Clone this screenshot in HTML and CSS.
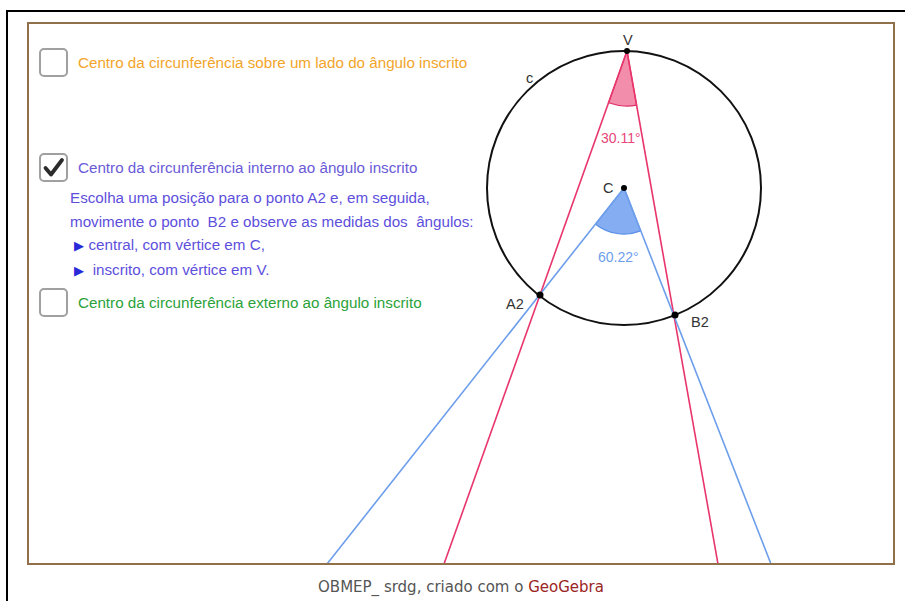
FILE: index.html
```html
<!DOCTYPE html>
<html lang="pt">
<head>
    <meta charset="UTF-8">
    <meta name="viewport" content="width=device-width, initial-scale=1.0">
    <title>Ângulo inscrito e ângulo central</title>
    <link rel="stylesheet" href="styles.css">
</head>
<body>
    <div class="frame">
        <div class="applet">
            <svg class="figure" width="864" height="539" viewBox="29 24 864 539">
                <!-- angulos -->
                <path d="M624 188 L595.6 224.2 A46 46 0 0 0 640.7 230.9 Z" fill="#6f9ff0" fill-opacity="0.85" stroke="#5b8fe8" stroke-width="1.2"/>
                <path d="M627 51 L608.5 102.8 A55 55 0 0 0 636.6 105.2 Z" fill="#ec5c88" fill-opacity="0.7" stroke="#e0306a" stroke-width="1.2"/>

                <!-- semirretas -->
                <line x1="627" y1="51" x2="444" y2="564" stroke="#e8356c" stroke-width="1.6"/>
                <line x1="627" y1="51" x2="718" y2="564" stroke="#e8356c" stroke-width="1.6"/>
                <line x1="624" y1="188" x2="327" y2="564" stroke="#6d9eeb" stroke-width="1.6"/>
                <line x1="624" y1="188" x2="771" y2="564" stroke="#6d9eeb" stroke-width="1.6"/>

                <circle cx="624" cy="188" r="137" fill="none" stroke="#111" stroke-width="2"/>

                <!-- pontos -->
                <circle cx="627" cy="51" r="3" fill="#000"/>
                <circle cx="624" cy="188" r="3" fill="#000"/>
                <circle cx="540" cy="295" r="3.5" fill="#000"/>
                <circle cx="675" cy="315" r="3.5" fill="#000"/>

                <g class="labels">
                    <text x="623" y="45">V</text>
                    <text x="526" y="83">c</text>
                    <text x="603" y="193">C</text>
                    <text x="506" y="309">A2</text>
                    <text x="691" y="327">B2</text>
                </g>
                <text class="measure red" x="601" y="143">30.11°</text>
                <text class="measure blue" x="598" y="262">60.22°</text>
            </svg>

            <div class="controls">
                <label class="option orange">
                    <span class="box"></span>
                    <span>Centro da circunferência sobre um lado do ângulo inscrito</span>
                </label>

                <label class="option purple second">
                    <span class="box">
                        <svg width="25" height="25" viewBox="0 0 25 25">
                            <path d="M4.5 13 L10 19.5 L21 5" fill="none" stroke="#2b2b2b" stroke-width="3.8" stroke-linecap="round" stroke-linejoin="round"/>
                        </svg>
                    </span>
                    <span>Centro da circunferência interno ao ângulo inscrito</span>
                </label>

                <div class="hint">
                    <div class="line">Escolha uma posição para o ponto A2 e, em seguida,</div>
                    <div class="line">movimente o ponto  B2 e observe as medidas dos  ângulos:</div>
                    <div class="line"> <span class="arrow">▶</span> central, com vértice em C,</div>
                    <div class="line"> <span class="arrow">▶</span>  inscrito, com vértice em V.</div>
                </div>

                <label class="option green">
                    <span class="box"></span>
                    <span>Centro da circunferência externo ao ângulo inscrito</span>
                </label>
            </div>
        </div>

        <p class="credit">OBMEP_ srdg, criado com o <span class="brand">GeoGebra</span></p>
    </div>
</body>
</html>
```

FILE: styles.css
```css
body {
    margin: 0;
    background: #fff;
    font-family: 'Liberation Sans', Arial, sans-serif;
}

.frame {
    margin: 10px 0 0 6px;
    height: 591px;
    box-sizing: border-box;
    border-top: 2px solid #000;
    border-left: 2px solid #000;
    padding: 10px 0 0 19px;
}

.applet {
    position: relative;
    width: 864px;
    height: 539px;
    border: 2px solid #90704a;
    background: #fff;
}

.figure {
    position: absolute;
    left: 0;
    top: 0;
}

.labels text {
    font-family: 'Liberation Sans', Arial, sans-serif;
    font-size: 14.5px;
    fill: #333;
}

.measure {
    font-family: 'Liberation Sans', Arial, sans-serif;
    font-size: 14px;
}

.measure.red {
    fill: #e8457a;
}

.measure.blue {
    fill: #6d9eeb;
}

.controls {
    position: relative;
    padding: 24px 0 0 10px;
    width: 470px;
}

.option {
    display: flex;
    align-items: center;
    gap: 10px;
    height: 29px;
    font-size: 15.2px;
    cursor: pointer;
}

.box {
    width: 29px;
    height: 29px;
    flex: none;
    box-sizing: border-box;
    border: 2px solid #a0a0a0;
    border-radius: 5px;
    background: #fff;
    display: flex;
    align-items: center;
    justify-content: center;
}

.orange {
    color: #f2a52a;
}

.purple {
    color: #6a5ad8;
}

.green {
    color: #2ba23a;
}

.second {
    margin-top: 76px;
}

.hint {
    margin: 4px 0 0 31px;
    font-size: 15.2px;
    line-height: 23.5px;
    color: #5d4fdc;
}

.line {
    white-space: pre;
}

.arrow {
    color: #2a2ad8;
    font-size: 13px;
}

.hint + .option {
    margin-top: 6px;
}

.credit {
    margin: 0;
    width: 868px;
    padding-top: 13px;
    text-align: center;
    font-family: 'DejaVu Sans', sans-serif;
    font-size: 15px;
    color: #555;
}

.brand {
    color: #9b2424;
}
```
